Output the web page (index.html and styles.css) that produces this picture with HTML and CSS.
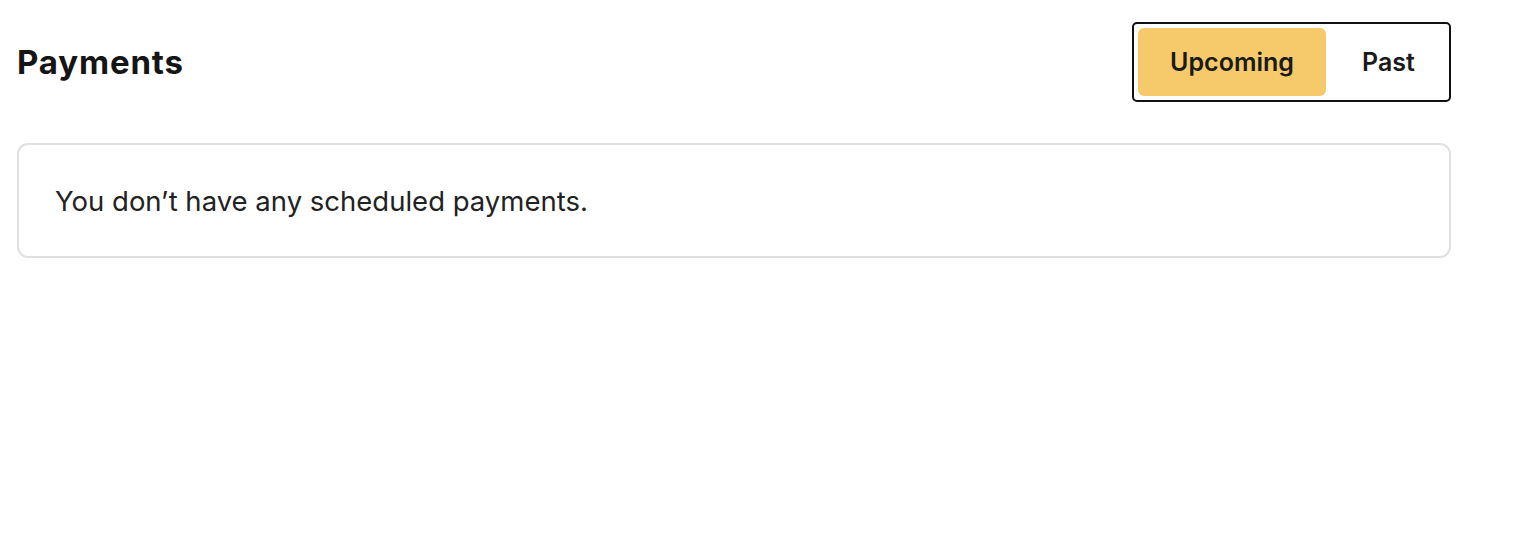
FILE: index.html
```html
<!DOCTYPE html>
<html lang="en">
<head>
<meta charset="utf-8">
<title>Payments</title>
<link rel="stylesheet" href="styles.css">
</head>
<body>
<main class="page">
  <header class="page-header">
    <h1 class="title">Payments</h1>
    <div class="toggle" role="tablist">
      <button class="toggle-btn active" role="tab">Upcoming</button>
      <button class="toggle-btn past" role="tab">Past</button>
    </div>
  </header>
  <section class="card">
    <p class="empty">You don’t have any scheduled payments.</p>
  </section>
</main>
</body>
</html>
```
FILE: styles.css
```css
* { box-sizing: border-box; }
html, body { margin: 0; padding: 0; background: #fff; }
body { font-family: Inter, "Noto Sans", sans-serif; color: #1a1a1a; }
.page { width: 1451px; padding: 22px 0 0 17px; }
.page-header { display: flex; justify-content: space-between; align-items: center; }
.title { margin: 0; font-size: 33px; font-weight: 700; letter-spacing: 0.85px; color: #151515; }
.toggle { display: flex; width: 319px; height: 80px; border: 2px solid #111; border-radius: 5px; padding: 4px; }
.toggle-btn { border: 0; background: transparent; font-family: inherit; font-size: 25px; font-weight: 600; color: #1a1a1a; border-radius: 6px; padding: 0; height: 100%; display: flex; align-items: center; justify-content: center; }
.toggle-btn.active { background: #f6ca6a; width: 188px; }
.toggle-btn.past { width: 119px; padding-left: 6px; }
.card { margin-top: 41px; border: 2px solid #e0e0e0; border-radius: 11px; height: 115px; display: flex; align-items: center; padding: 0 36px; }
.empty { margin: 0; font-size: 27.5px; color: #222; }
```
